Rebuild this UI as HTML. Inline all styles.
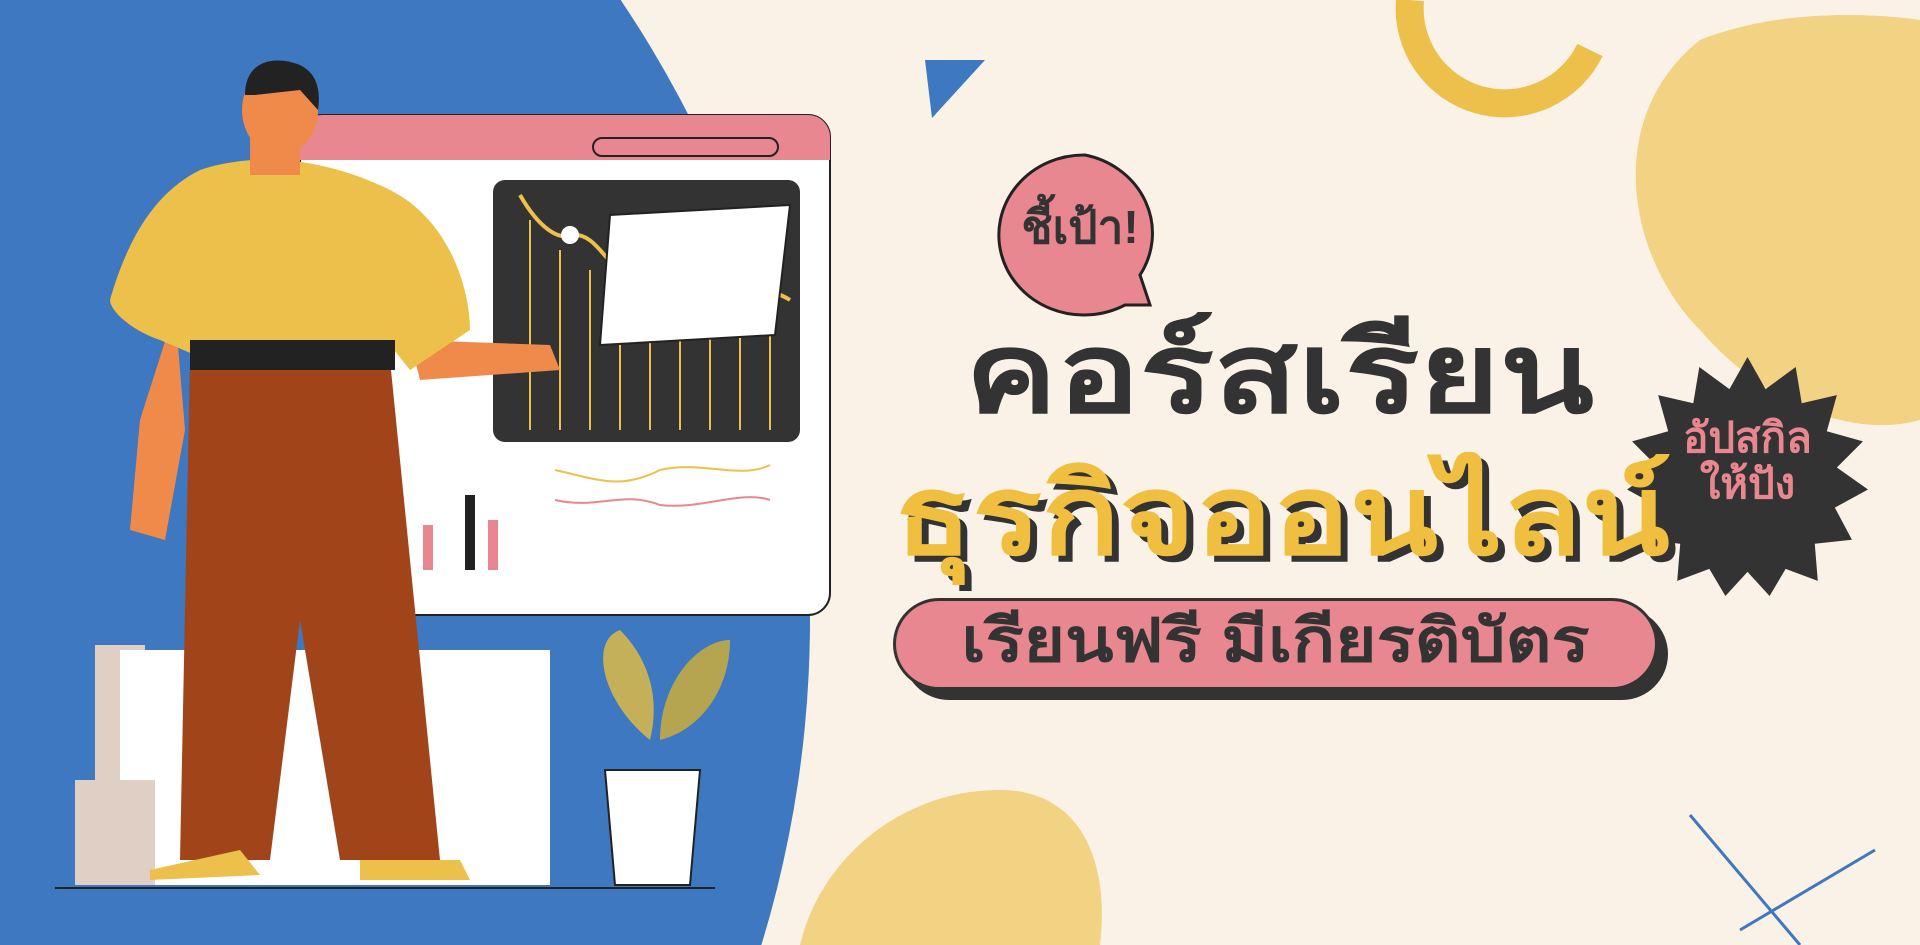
<!DOCTYPE html>
<html><head><meta charset="utf-8"><style>
html,body{margin:0;padding:0;width:1920px;height:945px;overflow:hidden;background:#faf2e6;font-family:"Liberation Sans","DejaVu Sans",sans-serif;position:relative}
.a{position:absolute}
</style></head><body>
<svg class="a" style="left:0;top:0" width="1920" height="945" viewBox="0 0 1920 945">
<rect width="1920" height="945" fill="#faf2e6"/>
<circle cx="-300" cy="620" r="1110" fill="#3d78c0"/>
<path d="M1700 40 C1800 0 1920 20 1920 20 L1920 420 C1850 440 1760 400 1700 330 C1630 260 1600 120 1700 40Z" fill="#f2d283"/>
<path d="M1410 0 A95 95 0 0 0 1590 50" fill="none" stroke="#ecc04a" stroke-width="28"/>
<polygon points="925,60 985,60 932,118" fill="#3d78c0"/>
<path d="M800 945 C820 860 900 790 1000 790 C1080 790 1110 860 1100 945Z" fill="#f2d283"/>
<line x1="1690" y1="815" x2="1800" y2="945" stroke="#3d78c0" stroke-width="3"/>
<line x1="1740" y1="930" x2="1875" y2="850" stroke="#3d78c0" stroke-width="3"/>
<line x1="55" y1="888" x2="715" y2="888" stroke="#222" stroke-width="2"/>
<rect x="95" y="645" width="50" height="240" fill="#e0cfc5"/>
<rect x="120" y="650" width="430" height="235" fill="#fff"/>
<rect x="75" y="780" width="80" height="105" fill="#e0cfc5"/>
<path d="M650 740 C600 700 590 640 620 630 C650 660 660 700 650 740Z" fill="#c5b05a"/>
<path d="M660 740 C660 680 700 640 730 640 C730 690 700 730 660 740Z" fill="#b5a450"/>
<polygon points="605,770 700,770 690,885 615,885" fill="#fff" stroke="#222" stroke-width="2"/>
<rect x="300" y="115" width="530" height="500" rx="22" fill="#fff" stroke="#222" stroke-width="2"/>
<path d="M322 115 H808 A22 22 0 0 1 830 137 V160 H300 V137 A22 22 0 0 1 322 115Z" fill="#e8878f"/>
<rect x="593" y="138" width="185" height="18" rx="9" fill="#e8878f" stroke="#222" stroke-width="2"/>
<rect x="493" y="180" width="307" height="262" rx="12" fill="#333"/>
<g stroke="#ecc04a" stroke-width="2">
<line x1="530" y1="220" x2="530" y2="430"/><line x1="560" y1="250" x2="560" y2="430"/><line x1="590" y1="270" x2="590" y2="430"/><line x1="620" y1="290" x2="620" y2="430"/><line x1="650" y1="320" x2="650" y2="430"/><line x1="680" y1="330" x2="680" y2="430"/><line x1="710" y1="320" x2="710" y2="430"/><line x1="740" y1="300" x2="740" y2="430"/><line x1="770" y1="290" x2="770" y2="430"/></g>
<path d="M520 195 C540 230 560 240 570 235 C600 230 610 280 640 280 C700 290 760 280 790 300" fill="none" stroke="#ecc04a" stroke-width="4"/>
<circle cx="570" cy="235" r="9" fill="#fff"/>
<path d="M610 215 L790 205 L775 335 L600 345Z" fill="#fff" stroke="#222" stroke-width="2"/>
<path d="M555 470 C600 480 620 490 660 470 C700 460 740 480 770 465" fill="none" stroke="#ecc04a" stroke-width="2"/>
<path d="M555 500 C600 510 620 490 660 505 C700 510 740 490 770 500" fill="none" stroke="#e8878f" stroke-width="2"/>
<rect x="423" y="525" width="10" height="45" fill="#e8878f"/><rect x="465" y="495" width="10" height="75" fill="#222"/><rect x="488" y="520" width="10" height="50" fill="#e8878f"/>
<path d="M190 360 L390 360 L440 860 L340 860 L300 620 L270 860 L180 860Z" fill="#a2441a"/>
<path d="M150 870 L240 850 L260 875 L150 880Z" fill="#ecc04a"/>
<path d="M360 860 L460 860 L470 880 L360 880Z" fill="#ecc04a"/>
<path d="M175 310 L140 420 L130 530 L165 540 L185 430Z" fill="#f08a4a"/>
<path d="M410 340 L550 345 L560 370 L420 380Z" fill="#f08a4a"/>
<path d="M200 170 C260 150 330 160 390 190 C450 220 470 290 470 330 L410 370 L390 345 L195 355 L160 340 C130 330 110 310 110 300 C130 230 160 190 200 170Z" fill="#ecc04a"/>
<rect x="190" y="340" width="205" height="30" fill="#222"/>
<rect x="250" y="120" width="50" height="55" fill="#f08a4a"/>
<ellipse cx="280" cy="110" rx="38" ry="45" fill="#f08a4a"/>
<path d="M245 95 C245 60 275 55 300 65 C320 75 320 95 318 110 L300 90 L255 95Z" fill="#222"/>
</svg>

<svg class="a" style="left:1625px;top:355px" width="245" height="245" viewBox="-122 -122 244 244">
<polygon fill="#333" points="0,-120 18,-88 48,-110 54,-74 89,-82 79,-46 115,-36 89,-10 120,12 87,30 104,62 67,66 70,103 38,91 22,118 0,94 -22,118 -38,91 -70,103 -67,66 -104,62 -87,30 -120,12 -89,-10 -115,-36 -79,-46 -89,-82 -54,-74 -48,-110 -18,-88"/>
</svg>
<div class="a" style="left:1665px;top:415px;width:165px;text-align:center;font-size:42px;font-weight:bold;color:#e8878f;line-height:1.1">อัปสกิล<br>ให้ปัง</div>

<svg class="a" style="left:995px;top:150px" width="180" height="170" viewBox="0 0 180 170">
<path d="M90 5 A85 80 0 1 0 130 155 L155 155 L145 125 A85 80 0 0 0 90 5Z" fill="#e8878f" stroke="#222" stroke-width="3"/>
</svg>
<div class="a" style="left:1000px;top:200px;width:160px;text-align:center;font-size:46px;font-weight:bold;color:#333;line-height:1.2">ชี้เป้า!</div>

<div class="a" style="left:965px;top:318px;font-size:112px;font-weight:bold;color:#333;line-height:1;white-space:nowrap;transform:scaleX(1.23);transform-origin:0 0">คอร์สเรียน</div>
<div class="a" style="left:894px;top:460px;font-size:112px;font-weight:bold;color:#f0bf3f;line-height:1;white-space:nowrap;text-shadow:6px 6px 0 #333;transform:scaleX(1.15);transform-origin:0 0">ธุรกิจออนไลน์</div>

<div class="a" style="left:903px;top:608px;width:765px;height:92px;border-radius:46px;background:#333"></div>
<div class="a" style="left:893px;top:598px;width:765px;height:92px;border-radius:46px;background:#e8878f;border:3px solid #333;box-sizing:border-box"></div>
<div class="a" style="left:893px;top:598px;width:765px;height:92px;text-align:center;line-height:86px;font-size:60px;font-weight:bold;color:#333;white-space:nowrap;transform:scaleX(1.18)">เรียนฟรี มีเกียรติบัตร</div>
</body></html>
